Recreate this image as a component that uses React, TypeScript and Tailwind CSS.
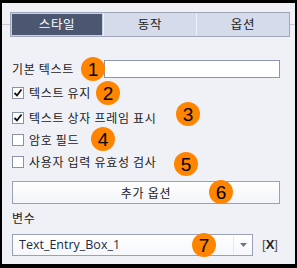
import React from 'react';

const badges = [
  { n: 1, x: 79, y: 54 },
  { n: 2, x: 94, y: 78 },
  { n: 3, x: 174, y: 99 },
  { n: 4, x: 89, y: 124 },
  { n: 5, x: 172, y: 149 },
  { n: 6, x: 207, y: 177 },
  { n: 7, x: 190, y: 230 },
];

function Check({ checked, label }: { checked?: boolean; label: string }) {
  return (
    <div className="flex items-center h-4 gap-[5px]">
      <div className="w-[12px] h-[12px] border border-[#8a92aa] bg-white flex items-center justify-center">
        {checked && (
          <svg width="10" height="10" viewBox="0 0 10 10">
            <path d="M1.5 5 L4 7.5 L8.5 1.5" stroke="#111" strokeWidth="1.8" fill="none" />
          </svg>
        )}
      </div>
      <span>{label}</span>
    </div>
  );
}

export default function App() {
  return (
    <div
      className="w-[297px] h-[268px] bg-black pl-[2px] pr-[2px] pt-[3px] pb-[4px] text-[12px] tracking-[0.7px] text-[#1a1a1a]"
      style={{ fontFamily: '"Noto Sans CJK KR", "Noto Sans", sans-serif' }}
    >
      <div className="relative w-full h-full bg-[#f0f0f7] flex flex-col">
        {/* tab strip */}
        <div className="flex items-center mt-[9px]">
          <div className="w-[8px] h-px bg-[#c6c9d4]" />
          <div className="w-[280px] h-[25px] flex border border-[#a0a7bd] bg-[#d6dbeb] text-[12.5px]">
            <div className="w-[92px] h-full border border-[#c9cee0] bg-[#4b5670] text-white flex items-center justify-center">
              스타일
            </div>
            <div className="w-[93px] h-full border-l border-[#eef0f8] flex items-center justify-center">동작</div>
            <div className="flex-1 h-full border-l border-[#eef0f8] flex items-center justify-center">옵션</div>
          </div>
          <div className="flex-1 h-px bg-[#c6c9d4]" />
        </div>

        <div className="pl-[10px] pr-[15px] flex flex-col">
          <div className="mt-[23px] h-[18px] flex items-center justify-between">
            <span>기본 텍스트</span>
            <div className="w-[176px] h-[18px] border border-[#8d95ad] bg-white" />
          </div>
          <div className="mt-[7px]"><Check checked label="텍스트 유지" /></div>
          <div className="mt-[9px]"><Check checked label="텍스트 상자 프레임 표시" /></div>
          <div className="mt-[6px]"><Check label="암호 필드" /></div>
          <div className="mt-[6px]"><Check label="사용자 입력 유효성 검사" /></div>

          <div className="mt-[11px] h-[23px] border border-[#9aa1b7] bg-gradient-to-b from-white to-[#f3f4f9] flex items-center justify-center">
            추가 옵션
          </div>

          <div className="mt-[6px] h-4 flex items-center">변수</div>

          <div className="mt-[8px] flex items-center">
            <div className="w-[241px] h-[22px] border border-[#9aa1b7] bg-gradient-to-b from-white to-[#f6f7fb] flex items-center">
              <span
                className="pl-[6px] flex-1 text-[12.5px] tracking-normal text-[#1f2a44]"
                style={{ fontFamily: '"Open Sans", "Noto Sans", sans-serif' }}
              >
                Text_Entry_Box_1
              </span>
              <div className="w-px h-[18px] bg-[#e6e8ef]" />
              <div className="w-[18px] flex items-center justify-center">
                <svg width="7" height="4" viewBox="0 0 7 4">
                  <path d="M0 0 L7 0 L3.5 4 Z" fill="#6b7388" />
                </svg>
              </div>
            </div>
            <span
              className="ml-[9px] text-[13px] tracking-normal text-[#555]"
              style={{ fontFamily: '"Liberation Sans", sans-serif' }}
            >
              [<span className="font-bold text-[#222]">X</span>]
            </span>
          </div>
        </div>

        {badges.map((b) => (
          <div
            key={b.n}
            className="absolute w-[24px] h-[24px] rounded-full bg-[#ff8500] flex items-center justify-center text-black text-[19px] tracking-normal leading-none"
            style={{ left: b.x, top: b.y, fontFamily: '"Liberation Sans", Arial, sans-serif' }}
          >
            {b.n}
          </div>
        ))}
      </div>
    </div>
  );
}
